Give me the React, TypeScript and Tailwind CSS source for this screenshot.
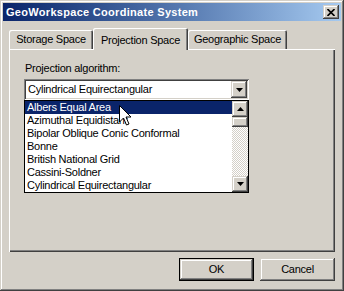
import React from "react";

const raised =
  "shadow-[inset_-1px_-1px_0_#404040,inset_1px_1px_0_#d4d0c8,inset_-2px_-2px_0_#808080,inset_2px_2px_0_#ffffff]";
const sunken =
  "shadow-[inset_1px_1px_0_#808080,inset_-1px_-1px_0_#ffffff,inset_2px_2px_0_#404040,inset_-2px_-2px_0_#d4d0c8]";
const tabShadow =
  "shadow-[inset_1px_1px_0_#ffffff,inset_-1px_0_0_#404040,inset_-2px_0_0_#808080]";

function Arrow({ up = false }: { up?: boolean }) {
  return (
    <svg width="7" height="4" viewBox="0 0 7 4" className="block">
      {up ? (
        <path d="M3.5 0 L7 4 L0 4 Z" fill="#000" />
      ) : (
        <path d="M0 0 L7 0 L3.5 4 Z" fill="#000" />
      )}
    </svg>
  );
}

const items = [
  "Albers Equal Area",
  "Azimuthal Equidistant",
  "Bipolar Oblique Conic Conformal",
  "Bonne",
  "British National Grid",
  "Cassini-Soldner",
  "Cylindrical Equirectangular",
];

export default function App() {
  return (
    <div
      className={`relative w-[344px] h-[291px] bg-[#d4d0c8] p-[3px] flex flex-col text-black text-[11px] tracking-[-0.25px] ${raised}`}
      style={{ fontFamily: '"Liberation Sans", Arial, sans-serif' }}
    >
      {/* Title bar */}
      <div className="h-[18px] bg-linear-to-r from-[#0a246a] to-[#a6caf0] flex items-center justify-between pl-[3px] pr-[2px]">
        <span className="text-white font-bold text-[11px] tracking-[0.3px] leading-none">
          GeoWorkspace Coordinate System
        </span>
        <div className={`w-[16px] h-[14px] bg-[#d4d0c8] flex items-center justify-center ${raised}`}>
          <svg width="8" height="7" viewBox="0 0 8 7" className="block">
            <path d="M0.5 0 L7.5 7 M7.5 0 L0.5 7" stroke="#000" strokeWidth="1.6" />
          </svg>
        </div>
      </div>

      <div className="flex flex-col px-[6px]">
        {/* Tabs */}
        <div className="mt-[7px] h-[21px] flex items-end">
          <div className={`w-[84px] h-[19px] rounded-t-[2px] flex items-center justify-center ${tabShadow}`}>
            Storage Space
          </div>
          <div
            className={`relative z-10 w-[95px] h-[22px] mb-[-1px] bg-[#d4d0c8] rounded-t-[2px] flex items-start pt-[4px] justify-center ${tabShadow}`}
          >
            Projection Space
          </div>
          <div className={`w-[99px] h-[19px] rounded-t-[2px] flex items-center justify-center ${tabShadow}`}>
            Geographic Space
          </div>
        </div>

        {/* Panel */}
        <div className="h-[203px] w-[326px] shadow-[inset_1px_1px_0_#ffffff,inset_-1px_-1px_0_#404040,inset_-2px_-2px_0_#808080] pt-[13px] pl-[15px] flex flex-col">
          <div className="h-[13px] leading-[13px] pl-[1px]">Projection algorithm:</div>
          {/* Combo */}
          <div className={`mt-[4px] w-[225px] h-[21px] bg-white p-[2px] flex ${sunken}`}>
            <div className="flex-1 flex items-center pl-[2px]">Cylindrical Equirectangular</div>
            <div className={`w-[16px] h-[17px] bg-[#d4d0c8] flex items-center justify-center ${raised}`}>
              <Arrow />
            </div>
          </div>
          {/* List */}
          <div className="w-[225px] h-[93px] border border-black bg-white flex">
            <div className="flex-1 flex flex-col">
              {items.map((it, i) => (
                <div
                  key={it}
                  className={`h-[13px] leading-[13px] pl-[2px] whitespace-nowrap overflow-hidden ${
                    i === 0 ? "bg-[#0a246a] text-white" : ""
                  }`}
                >
                  {it}
                </div>
              ))}
            </div>
            <div className="w-[16px] flex flex-col">
              <div className={`h-[16px] bg-[#d4d0c8] flex items-center justify-center ${raised}`}>
                <Arrow up />
              </div>
              <div className={`h-[10px] bg-[#d4d0c8] ${raised}`} />
              <div className="flex-1 bg-[repeating-conic-gradient(#d4d0c8_0_25%,#ffffff_0_50%)] bg-[length:2px_2px]" />
              <div className={`h-[16px] bg-[#d4d0c8] flex items-center justify-center ${raised}`}>
                <Arrow />
              </div>
            </div>
          </div>
        </div>

        {/* Buttons */}
        <div className="mt-[6px] flex justify-end gap-[6px]">
          <div className="w-[75px] h-[23px] border border-black">
            <div className={`w-full h-full flex items-center justify-center ${raised}`}>OK</div>
          </div>
          <div className={`w-[75px] h-[23px] flex items-center justify-center ${raised}`}>Cancel</div>
        </div>
      </div>

      {/* Mouse cursor */}
      <svg
        width="13"
        height="22"
        viewBox="0 0 13 22"
        className="absolute left-[119px] top-[105px]"
      >
        <path
          d="M0.5 0.5 L0.5 17 L4.5 13 L7.5 20 L10 19 L7 12 L12 12 Z"
          fill="#fff"
          stroke="#000"
          strokeWidth="1"
        />
      </svg>
    </div>
  );
}
